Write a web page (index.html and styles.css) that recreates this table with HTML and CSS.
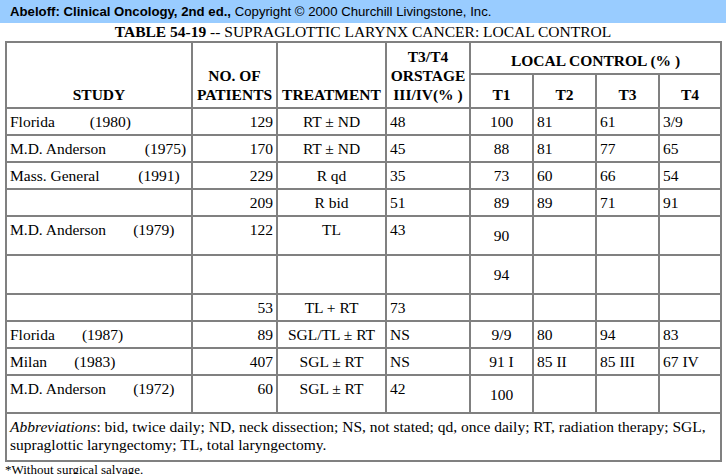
FILE: index.html
```html
<!DOCTYPE html>
<html>
<head>
<meta charset="utf-8">
<link rel="stylesheet" href="styles.css">
</head>
<body>
<div class="topbar"><b>Abeloff: Clinical Oncology, 2nd ed.,</b> Copyright © 2000 Churchill Livingstone, Inc.</div>
<div class="title"><b>TABLE 54-19</b> -- SUPRAGLOTTIC LARYNX CANCER: LOCAL CONTROL</div>
<table class="data">
<colgroup>
<col class="c-study"><col class="c-no"><col class="c-tr"><col class="c-st"><col class="c-t"><col class="c-t"><col class="c-t"><col class="c-t4">
</colgroup>
<thead>
<tr class="h1">
<th rowspan="2">STUDY</th>
<th rowspan="2">NO. OF<br>PATIENTS</th>
<th rowspan="2">TREATMENT</th>
<th rowspan="2">T3/T4<br>ORSTAGE<br>III/IV(% )</th>
<th colspan="4">LOCAL CONTROL (% )</th>
</tr>
<tr class="h2"><th>T1</th><th>T2</th><th>T3</th><th>T4</th></tr>
</thead>
<tbody>
<tr><td>Florida&nbsp;&nbsp;&nbsp;&nbsp;&nbsp;&nbsp;&nbsp;&nbsp;&nbsp;(1980)</td><td class="num">129</td><td class="ctr">RT ± ND</td><td>48</td><td class="mid">100</td><td>81</td><td>61</td><td>3/9</td></tr>
<tr><td>M.D. Anderson&nbsp;&nbsp;&nbsp;&nbsp;&nbsp;&nbsp;&nbsp;&nbsp;&nbsp;&nbsp;(1975)</td><td class="num">170</td><td class="ctr">RT ± ND</td><td>45</td><td class="mid">88</td><td>81</td><td>77</td><td>65</td></tr>
<tr><td>Mass. General&nbsp;&nbsp;&nbsp;&nbsp;&nbsp;&nbsp;&nbsp;&nbsp;&nbsp;&nbsp;(1991)</td><td class="num">229</td><td class="ctr">R qd</td><td>35</td><td class="mid">73</td><td>60</td><td>66</td><td>54</td></tr>
<tr><td></td><td class="num">209</td><td class="ctr">R bid</td><td>51</td><td class="mid">89</td><td>89</td><td>71</td><td>91</td></tr>
<tr class="tall"><td>M.D. Anderson&nbsp;&nbsp;&nbsp;&nbsp;&nbsp;&nbsp;&nbsp;(1979)</td><td class="num">122</td><td class="ctr">TL</td><td>43</td><td class="mid">90</td><td></td><td></td><td></td></tr>
<tr class="tall"><td></td><td class="num"></td><td class="ctr"></td><td></td><td class="mid">94</td><td></td><td></td><td></td></tr>
<tr><td></td><td class="num">53</td><td class="ctr">TL + RT</td><td>73</td><td class="mid"></td><td></td><td></td><td></td></tr>
<tr><td>Florida&nbsp;&nbsp;&nbsp;&nbsp;&nbsp;&nbsp;&nbsp;(1987)</td><td class="num">89</td><td class="ctr">SGL/TL ± RT</td><td>NS</td><td class="mid">9/9</td><td>80</td><td>94</td><td>83</td></tr>
<tr><td>Milan&nbsp;&nbsp;&nbsp;&nbsp;&nbsp;&nbsp;&nbsp;(1983)</td><td class="num">407</td><td class="ctr">SGL ± RT</td><td>NS</td><td class="mid">91 I</td><td>85 II</td><td>85 III</td><td>67 IV</td></tr>
<tr class="tall2"><td>M.D. Anderson&nbsp;&nbsp;&nbsp;&nbsp;&nbsp;&nbsp;&nbsp;(1972)</td><td class="num">60</td><td class="ctr">SGL ± RT</td><td>42</td><td class="mid">100</td><td></td><td></td><td></td></tr>
<tr class="footrow"><td colspan="8" class="foot"><i>Abbreviations</i>: bid, twice daily; ND, neck dissection; NS, not stated; qd, once daily; RT, radiation therapy; SGL, supraglottic laryngectomy; TL, total laryngectomy.</td></tr>
</tbody>
</table>
<div class="note">*Without surgical salvage.</div>
</body>
</html>
```

FILE: styles.css
```css
body {
  margin: 0;
  font-family: "Liberation Serif", "Times New Roman", serif;
  font-size: 15.5px;
  color: #000;
  background: #fff;
}
.topbar {
  background: #99ccff;
  font-family: "Liberation Sans", Arial, sans-serif;
  font-size: 13.2px;
  line-height: 15px;
  height: 15px;
  padding: 4px 10px;
  white-space: nowrap;
}
.title {
  text-align: center;
  line-height: 18px;
  white-space: nowrap;
}
table.data {
  border-collapse: collapse;
  table-layout: fixed;
  width: 717px;
  margin-left: 5px;
  border: 2px solid #808080;
}
.c-study { width: 186px; }
.c-no { width: 85px; }
.c-tr { width: 109px; }
.c-st { width: 84px; }
.c-t { width: 63px; }
.c-t4 { width: 62px; }
th, td {
  border: 2px solid #808080;
  padding: 3px 3px;
  line-height: 19px;
  white-space: nowrap;
}
th {
  vertical-align: bottom;
  text-align: center;
  padding: 2px 1px 3px;
  font-weight: bold;
}
.data tr.h1 { height: 32px; }
.data tr.h2 { height: 34px; }
td {
  vertical-align: top;
  text-align: left;
}
td.num { text-align: right; }
td.ctr { text-align: center; }
td.mid { text-align: center; vertical-align: middle; }
tr.tall { height: 39px; }
tr.tall2 { height: 38px; }
td.foot {
  white-space: normal;
  line-height: 18px;
  padding: 4px 3px 6px;
}
.note {
  font-size: 13px;
  line-height: 15px;
  padding-left: 5px;
}
```
